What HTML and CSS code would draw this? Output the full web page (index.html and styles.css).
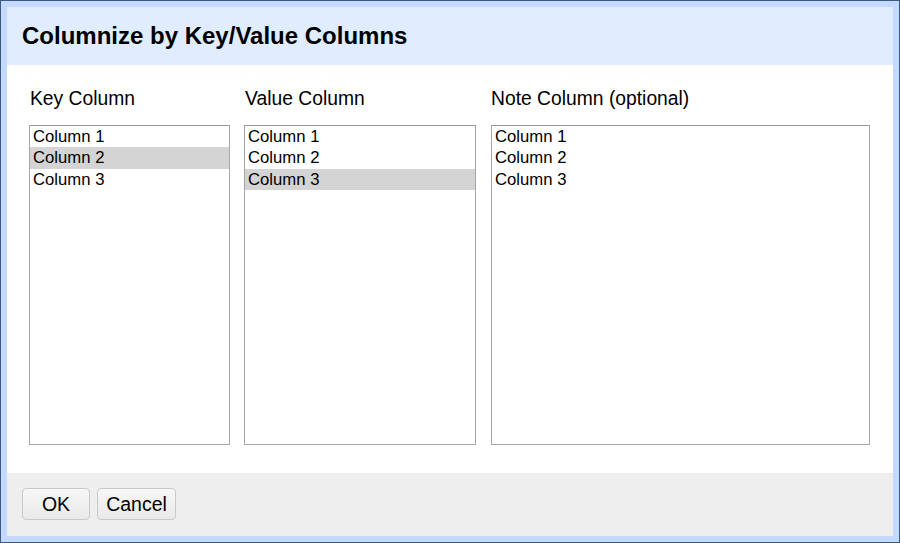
FILE: index.html
```html
<!DOCTYPE html>
<html>
<head>
<meta charset="utf-8">
<link rel="stylesheet" href="styles.css">
</head>
<body>
<div class="dialog">
  <div class="frame">
    <div class="header"><h1 class="title">Columnize by Key/Value Columns</h1></div>
    <div class="content">
      <div class="col col-key">
        <div class="label">Key Column</div>
        <div class="listbox">
          <div class="opt">Column 1</div>
          <div class="opt sel">Column 2</div>
          <div class="opt">Column 3</div>
        </div>
      </div>
      <div class="col col-value">
        <div class="label">Value Column</div>
        <div class="listbox">
          <div class="opt">Column 1</div>
          <div class="opt">Column 2</div>
          <div class="opt sel">Column 3</div>
        </div>
      </div>
      <div class="col col-note">
        <div class="label">Note Column (optional)</div>
        <div class="listbox">
          <div class="opt">Column 1</div>
          <div class="opt">Column 2</div>
          <div class="opt">Column 3</div>
        </div>
      </div>
    </div>
    <div class="footer">
      <button class="btn btn-ok">OK</button>
      <button class="btn btn-cancel">Cancel</button>
    </div>
  </div>
</div>
</body>
</html>
```
FILE: styles.css
```css
html, body {
  margin: 0;
  padding: 0;
  background: #ffffff;
}
body {
  font-family: "Liberation Sans", Arial, sans-serif;
  color: #000;
}
.dialog {
  width: 900px;
  height: 543px;
  box-sizing: border-box;
  border: 1px solid #3d5a7a;
  background: #c3d9ff;
  padding: 6px 6px 6px 6px;
}
.frame {
  height: 100%;
  display: flex;
  flex-direction: column;
  background: #fff;
}
.header {
  height: 58px;
  background: #e0ecff;
  display: flex;
  align-items: center;
  padding-left: 15px;
}
.title {
  margin: 0;
  font-size: 24px;
  font-weight: bold;
  padding-top: 0px;
}
.content {
  flex: 1;
  display: flex;
  padding: 23px 0 0 22px;
  background: #fff;
}
.col {
  display: flex;
  flex-direction: column;
}
.col-key { width: 201px; margin-right: 14px; }
.col-value { width: 232px; margin-right: 15px; }
.col-note { width: 379px; }
.label {
  font-size: 19.3px;
  height: 37px;
  line-height: 21px;
  padding-left: 1px;
}
.col-note .label { padding-left: 0; }
.listbox {
  height: 320px;
  box-sizing: border-box;
  border: 1px solid #a6a6a6;
  border-top-color: #999;
  background: #fff;
}
.opt {
  font-size: 16.7px;
  height: 21.3px;
  line-height: 21px;
  padding-left: 3px;
}
.opt.sel {
  background: #d4d4d4;
}
.footer {
  height: 63px;
  box-sizing: border-box;
  background: #eeeeee;
  display: flex;
  align-items: flex-start;
  padding: 15px 0 0 15px;
  gap: 7px;
}
.btn {
  height: 32px;
  box-sizing: border-box;
  border: 1px solid #c9c9c9;
  border-radius: 4px;
  background: linear-gradient(#f7f7f7, #e9e9e9);
  font-family: "Liberation Sans", Arial, sans-serif;
  font-size: 19.5px;
  color: #000;
  padding: 0;
}
.btn-ok { width: 68px; }
.btn-cancel { width: 79px; }
```
